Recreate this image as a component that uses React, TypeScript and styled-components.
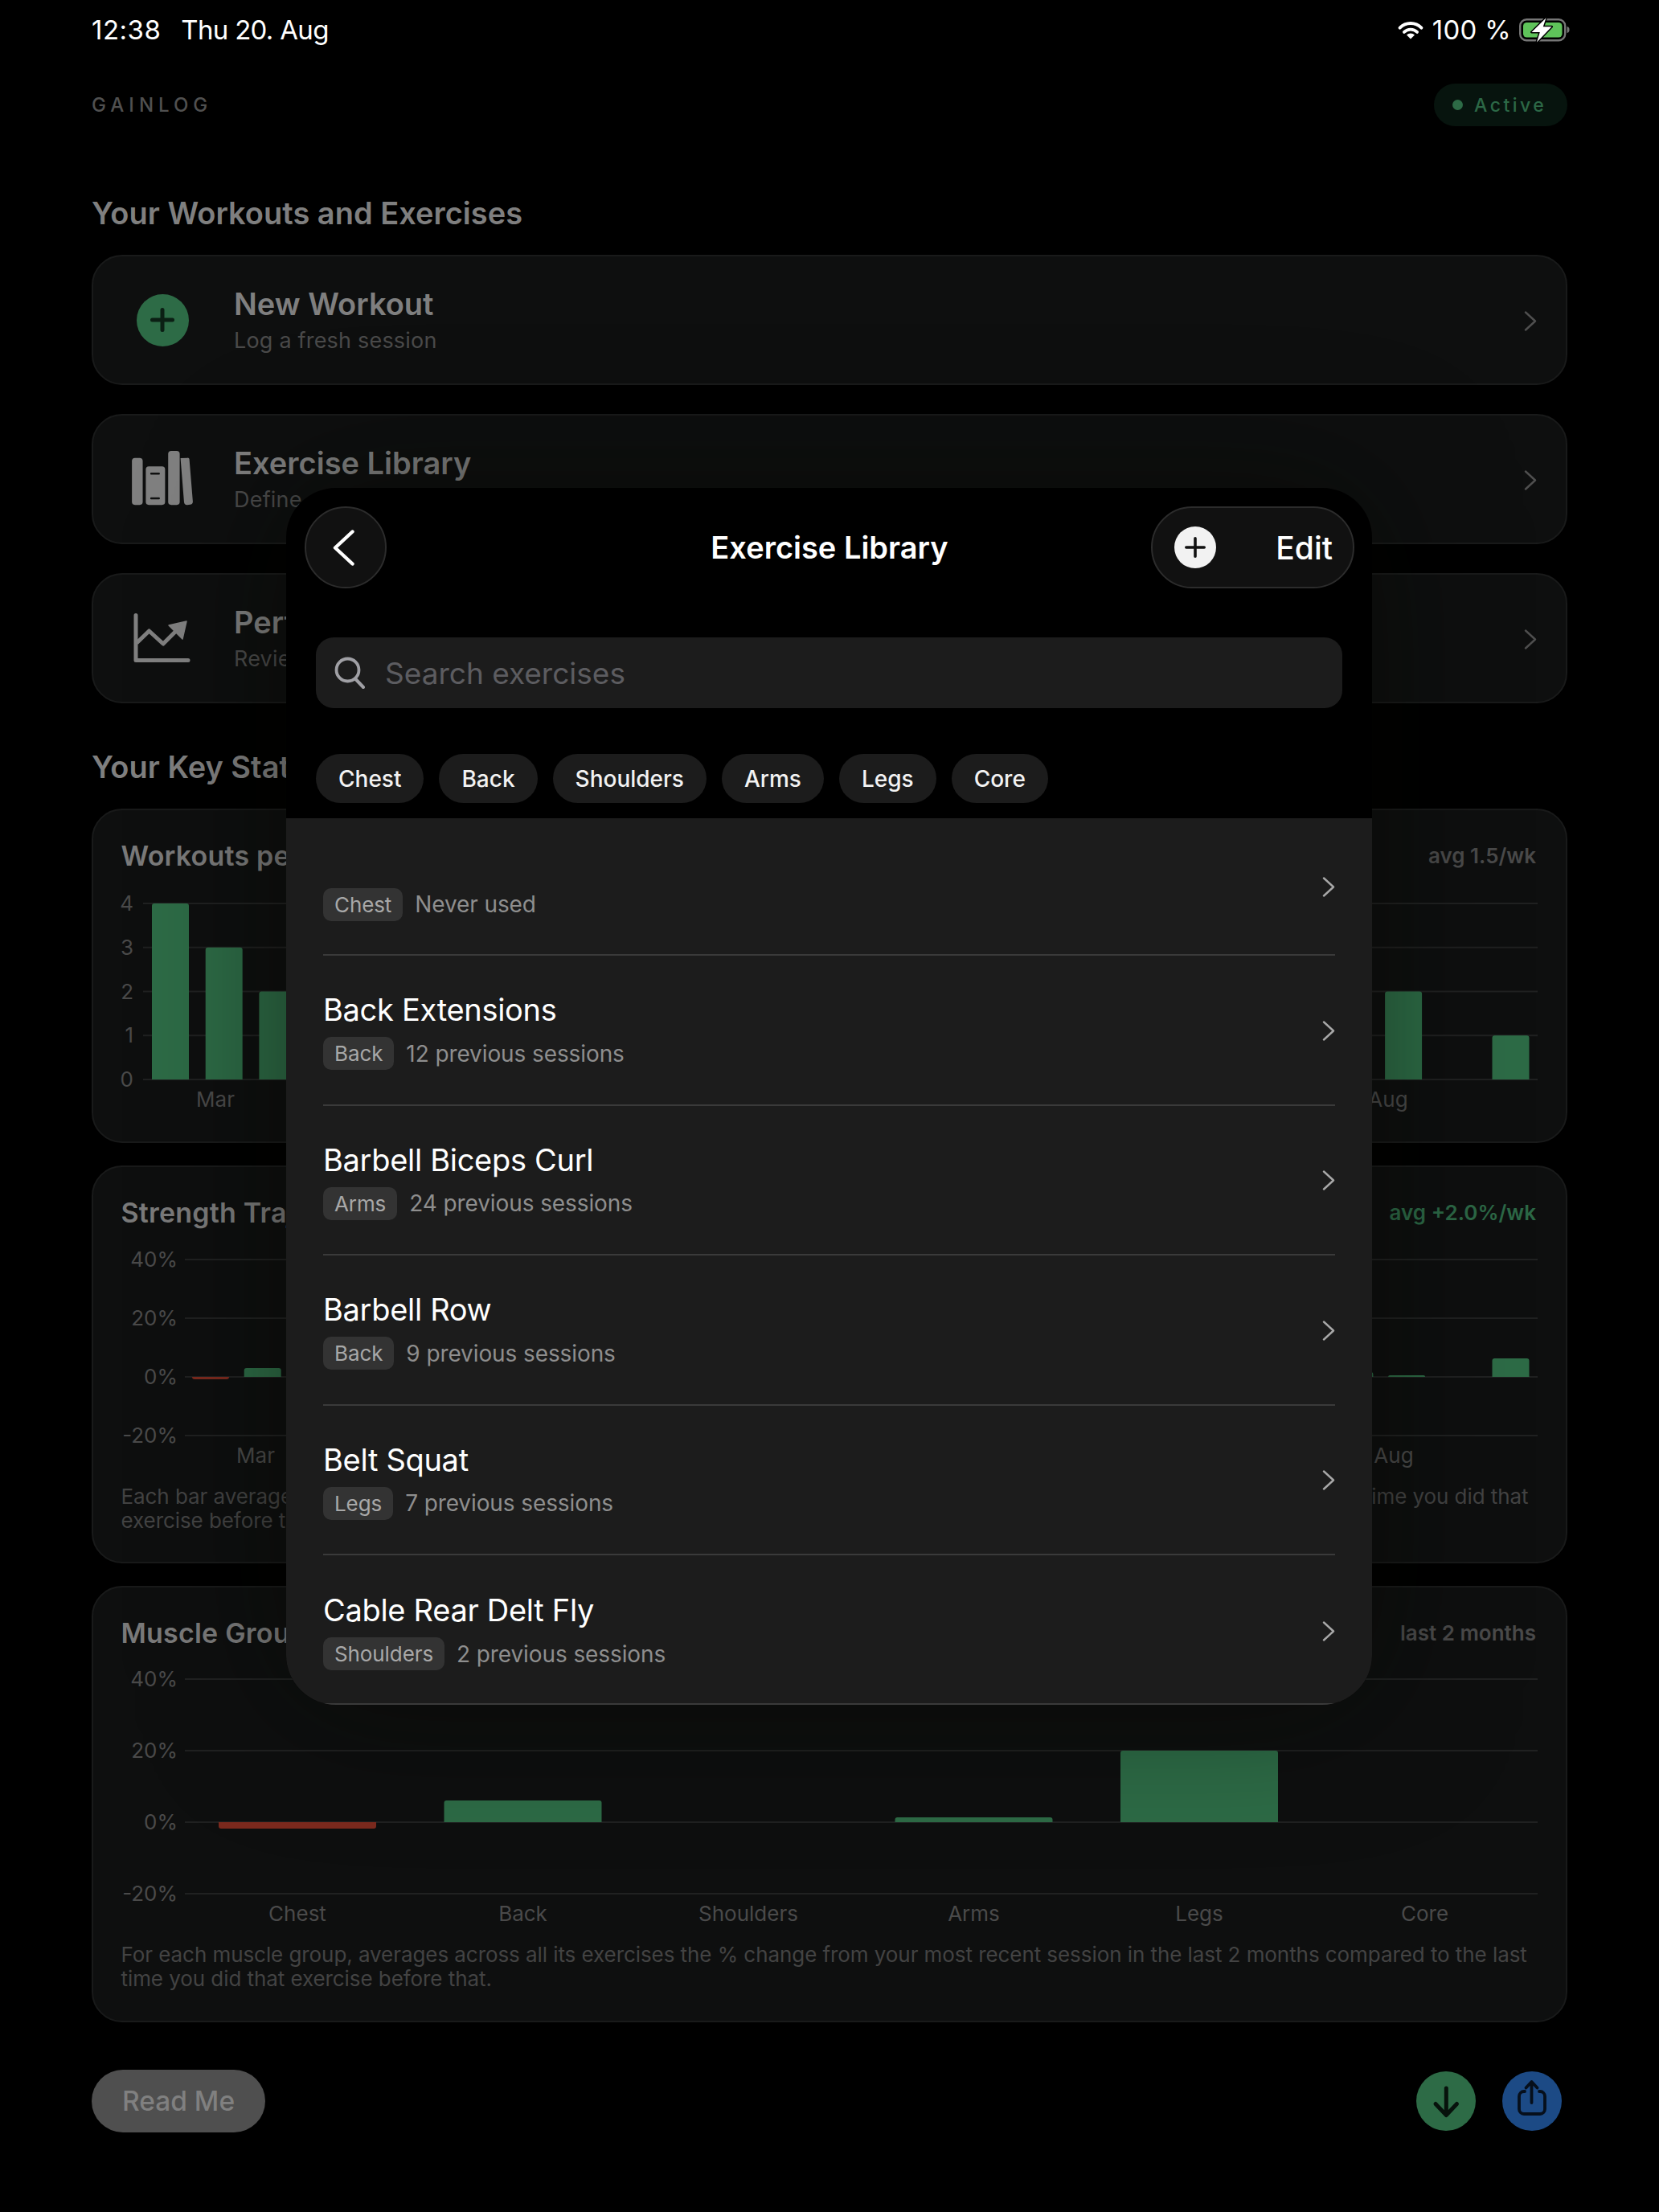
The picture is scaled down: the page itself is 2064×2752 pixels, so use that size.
import React from "react";
import styled, { createGlobalStyle } from "styled-components";

const GlobalStyle = createGlobalStyle`
  html, body {
    margin: 0;
    padding: 0;
    background: #000;
  }
  * {
    box-sizing: border-box;
  }
`;

const GREEN = "#2d6b46";
const RED = "#7c2a1e";
const GRID = "#202121";
const AXIS_TEXT = "#4a4a4a";
const FONT = `Inter, "Noto Sans", sans-serif`;

const Page = styled.div`
  position: relative;
  width: 2064px;
  height: 2752px;
  padding: 0 114px;
  overflow: hidden;
  background: #000;
  font-family: ${FONT};
`;

const StatusBar = styled.div`
  display: flex;
  align-items: center;
  justify-content: space-between;
  height: 74px;
  color: #fff;
  font-size: 33px;
`;

const StatusLeft = styled.div`
  display: flex;
  gap: 25px;
`;

const StatusTime = styled.span`
  letter-spacing: 0.5px;
`;

const StatusDate = styled.span`
  letter-spacing: -0.7px;
`;

const StatusRight = styled.div`
  display: flex;
  align-items: center;
  margin-right: -3px;
`;

const BatteryText = styled.span`
  margin: 0 10px 0 10px;
  letter-spacing: 0.3px;
`;

const BrandRow = styled.div`
  display: flex;
  align-items: center;
  justify-content: space-between;
  margin-top: 30px;
`;

const Brand = styled.div`
  color: #505050;
  font-size: 24px;
  font-weight: 500;
  letter-spacing: 6px;
`;

const ActivePill = styled.div`
  display: flex;
  align-items: center;
  gap: 14px;
  width: 166px;
  height: 53px;
  padding-left: 23px;
  border-radius: 27px;
  background: #07140e;
  color: #2c6846;
  font-size: 23px;
  font-weight: 500;
  letter-spacing: 3.5px;
`;

const ActiveDot = styled.span`
  width: 13px;
  height: 13px;
  border-radius: 50%;
  background: ${GREEN};
`;

const SectionTitle = styled.h2<{ $top: number }>`
  margin: ${(p) => p.$top}px 0 29px;
  color: #7f7f7f;
  font-size: 38px;
  font-weight: 600;
  line-height: 46px;
`;

const NavList = styled.div`
  display: flex;
  flex-direction: column;
  gap: 36px;
`;

const NavCard = styled.div`
  display: flex;
  align-items: center;
  height: 162px;
  padding-right: 36px;
  border: 2px solid #191a1a;
  border-radius: 38px;
  background: #0e0f0f;
`;

const NavIconSlot = styled.div`
  display: flex;
  align-items: center;
  justify-content: center;
  flex: 0 0 175px;
  padding-right: 3px;
`;

const NavText = styled.div`
  flex: 1;
`;

const NavTitle = styled.div`
  color: #7f7f7f;
  font-size: 38px;
  font-weight: 600;
  line-height: 46px;
`;

const NavSub = styled.div`
  margin-top: 6px;
  color: #4a4a4a;
  font-size: 27px;
  line-height: 34px;
  letter-spacing: 0.2px;
`;

const GreenCircle = styled.div`
  display: flex;
  align-items: center;
  justify-content: center;
  width: 65px;
  height: 65px;
  border-radius: 50%;
  background: ${GREEN};
`;

const Stats = styled.div`
  display: flex;
  flex-direction: column;
  gap: 28px;
`;

const ChartCard = styled.div<{ $height: number }>`
  height: ${(p) => p.$height}px;
  padding: 34px 36px 0 36px;
  border: 2px solid #191a1a;
  border-radius: 38px;
  background: #0e0f0f;
`;

const ChartHeader = styled.div`
  display: flex;
  align-items: center;
  justify-content: space-between;
  height: 44px;
  margin: 0 0 14px -1.5px;
  padding-right: 1px;
`;

const ChartTitle = styled.div`
  color: #7a7a7a;
  font-size: 34px;
  font-weight: 600;
  letter-spacing: 0.2px;
`;

const ChartNote = styled.div<{ $green?: boolean }>`
  color: ${(p) => (p.$green ? "#2c6846" : "#4a4a4a")};
  font-size: 26px;
  font-weight: 600;
`;

const ChartSvg = styled.svg`
  display: block;
  overflow: visible;
`;

const AxisText = styled.text`
  fill: ${AXIS_TEXT};
  font-family: ${FONT};
  font-size: 26px;
`;

const ChartDesc = styled.p`
  margin: 17px 0 0 -1.5px;
  color: #434343;
  font-size: 26px;
  line-height: 30px;
  letter-spacing: -0.07px;
`;

const Footer = styled.div`
  display: flex;
  align-items: center;
  justify-content: space-between;
  margin-top: 59px;
  padding-right: 7px;
`;

const ReadMe = styled.div`
  display: flex;
  align-items: center;
  justify-content: center;
  width: 216px;
  height: 78px;
  border-radius: 39px;
  background: #4f4f4f;
  color: #808080;
  font-size: 33.5px;
  font-weight: 500;
`;

const RoundActions = styled.div`
  display: flex;
  gap: 33px;
`;

const RoundAction = styled.div<{ $color: string }>`
  width: 74px;
  height: 74px;
  border-radius: 50%;
  background: ${(p) => p.$color};
`;

/* sheet over the dimmed page */
const Sheet = styled.div`
  position: absolute;
  top: 607px;
  left: 356px;
  width: 1351px;
  height: 1514px;
  padding-top: 23px;
  overflow: hidden;
  border-radius: 62px;
  background: #000;
  box-shadow: 0 0 170px rgba(5, 7, 0, 0.5);
`;

const SheetBar = styled.div`
  display: grid;
  grid-template-columns: 1fr auto 1fr;
  align-items: center;
  padding: 0 22px 0 23px;
`;

const BackButton = styled.div`
  display: flex;
  align-items: center;
  justify-content: center;
  width: 102px;
  height: 102px;
  padding-right: 6px;
  border: 2px solid #2c2c2c;
  border-radius: 50%;
  background: #111;
`;

const SheetTitle = styled.div`
  color: #fff;
  font-size: 38px;
  font-weight: 600;
`;

const EditPill = styled.div`
  display: flex;
  align-items: center;
  justify-content: space-between;
  justify-self: end;
  width: 253px;
  height: 102px;
  padding: 0 25px 0 27px;
  border: 2px solid #2c2c2c;
  border-radius: 51px;
  background: #111;
  color: #fff;
  font-size: 39px;
  font-weight: 500;
`;

const WhiteCircle = styled.div`
  display: flex;
  align-items: center;
  justify-content: center;
  width: 52px;
  height: 52px;
  border-radius: 50%;
  background: #f2f2f2;
`;

const SearchBox = styled.div`
  display: flex;
  align-items: center;
  gap: 25px;
  height: 88px;
  margin: 61px 37px 0;
  padding-left: 23px;
  border-radius: 22px;
  background: #1c1c1c;
  color: #5c5c60;
  font-size: 37px;
`;

const ChipRow = styled.div`
  display: flex;
  gap: 19px;
  margin: 57px 37px 19px;
`;

const FilterChip = styled.div`
  display: flex;
  align-items: center;
  height: 61px;
  padding: 0 28px;
  border-radius: 31px;
  background: #1c1c1c;
  color: #f2f2f2;
  font-size: 28px;
  font-weight: 500;
`;

const ExerciseList = styled.div`
  height: 1103px;
  padding: 0 46px;
  border-bottom: 2px solid #3a3a3a;
  background: #1c1c1c;
`;

const ExerciseRow = styled.div<{ $short?: boolean; $last?: boolean }>`
  display: flex;
  align-items: center;
  justify-content: space-between;
  height: ${(p) => (p.$short ? 171 : 186.5)}px;
  border-bottom: ${(p) => (p.$last ? "none" : "2px solid #3a3a3a")};
`;

const ExerciseName = styled.div<{ $blank?: boolean }>`
  height: ${(p) => (p.$blank ? 36 : 50)}px;
  color: #fff;
  font-size: 38px;
  line-height: 50px;
  letter-spacing: -0.3px;
`;

const ExerciseMeta = styled.div`
  display: flex;
  align-items: center;
  gap: 15px;
  margin-top: 9px;
  color: #8e8e8e;
  font-size: 28px;
  letter-spacing: -0.1px;
`;

const MuscleTag = styled.span`
  display: flex;
  align-items: center;
  height: 41px;
  padding: 0 14px;
  border-radius: 10px;
  background: #333;
  color: #a8a8a8;
  font-size: 26px;
`;

const ChevronSvg = styled.svg`
  margin-top: 2px;
`;

const Chevron = ({ color }: { color: string }) => (
  <ChevronSvg width="16" height="25" viewBox="0 0 16 25" fill="none">
    <path
      d="M2 1.5 L14 12.5 L2 23.5"
      stroke={color}
      strokeWidth="2.4"
      strokeLinecap="round"
      strokeLinejoin="round"
    />
  </ChevronSvg>
);

const BackChevron = () => (
  <svg width="27" height="45" viewBox="0 0 27 45" fill="none">
    <path
      d="M24.5 2.5 L3 22.5 L24.5 42.5"
      stroke="#fff"
      strokeWidth="4.4"
      strokeLinecap="round"
      strokeLinejoin="round"
    />
  </svg>
);

const PlusIcon = ({ size, weight, color }: { size: number; weight: number; color: string }) => (
  <svg width={size} height={size} viewBox={`0 0 ${size} ${size}`} fill="none">
    <path
      d={`M${size / 2} ${weight / 2} V${size - weight / 2} M${weight / 2} ${size / 2} H${size - weight / 2}`}
      stroke={color}
      strokeWidth={weight}
      strokeLinecap="round"
    />
  </svg>
);

const WifiIcon = () => (
  <svg width="34" height="23" viewBox="0 0 34 23" fill="none">
    <path d="M3.6 8.6 A19 19 0 0 1 30.4 8.6" stroke="#fff" strokeWidth="4" strokeLinecap="round" />
    <path d="M8.9 13.9 A11.5 11.5 0 0 1 25.1 13.9" stroke="#fff" strokeWidth="3.8" strokeLinecap="round" />
    <path d="M17 22.5 L12 17.6 A7 7 0 0 1 22 17.6 Z" fill="#fff" />
  </svg>
);

const BatteryIcon = () => (
  <svg width="63" height="31" viewBox="0 0 63 31" fill="none">
    <rect x="1.2" y="2.2" width="56" height="26" rx="8" stroke="#767676" strokeWidth="2.4" />
    <rect x="5" y="6" width="48.5" height="18.5" rx="4.5" fill="#5fc35a" />
    <path d="M59.5 11 C62 11.5 62.5 13 62.5 15 C62.5 17 62 18.5 59.5 19 Z" fill="#767676" />
    <path
      d="M33.5 0.3 L15.5 18 H25.8 L22 30.5 L40.5 11.2 H29.8 Z"
      fill="#fff"
      stroke="#000"
      strokeWidth="3"
      strokeLinejoin="round"
      paintOrder="stroke"
    />
  </svg>
);

const BooksIcon = () => (
  <svg width="77" height="71" viewBox="0 0 80 74" fill="#808080">
    <rect x="0" y="9" width="14" height="61" rx="4" />
    <path d="M22 20 H39 a4 4 0 0 1 4 4 V66 a4 4 0 0 1 -4 4 H22 a4 4 0 0 1 -4 -4 V24 a4 4 0 0 1 4 -4 Z" />
    <rect x="47" y="0" width="15" height="70" rx="4" />
    <path d="M63 9.5 L72 9 a2 2 0 0 1 2.5 2 L79 66 a4 4 0 0 1 -3.5 3.7 L72 70 a4 4 0 0 1 -4.4 -3.5 L63 9.5 Z" />
    <path d="M25 29.5 H35 M25 61.5 H35" stroke="#101111" strokeWidth="2.6" strokeLinecap="round" />
  </svg>
);

const TrendIcon = () => (
  <svg width="72" height="62" viewBox="0 0 72 62" fill="none">
    <path d="M3 2.5 V58.5 H68" stroke="#808080" strokeWidth="5" strokeLinecap="round" strokeLinejoin="round" />
    <path d="M4 37 L19.5 22 L37 38 L54 21" stroke="#808080" strokeWidth="5" strokeLinejoin="round" />
    <path d="M44 15 L66 10 L61 32 Z" fill="#808080" stroke="#808080" strokeWidth="1.5" strokeLinejoin="round" />
  </svg>
);

const SearchIcon = () => (
  <svg width="38" height="40" viewBox="0 0 38 40" fill="none">
    <circle cx="16.5" cy="16.5" r="14" stroke="#a0a0a5" strokeWidth="3.8" />
    <path d="M26.5 28 L36 38" stroke="#a0a0a5" strokeWidth="4" strokeLinecap="round" />
  </svg>
);

const DownloadIcon = () => (
  <svg width="74" height="74" viewBox="0 0 74 74" fill="none">
    <path
      d="M37.3 21 V54 M24 40.5 L37.3 54.5 L50.5 40.5"
      stroke="#07120c"
      strokeWidth="5"
      strokeLinecap="round"
      strokeLinejoin="round"
    />
  </svg>
);

const ShareIcon = () => (
  <svg width="74" height="74" viewBox="0 0 74 74" fill="none">
    <path
      d="M28 25 H27 a6 6 0 0 0 -6 6 V47 a6 6 0 0 0 6 6 H47 a6 6 0 0 0 6 -6 V31 a6 6 0 0 0 -6 -6 H46"
      stroke="#060f1b"
      strokeWidth="3.8"
      strokeLinecap="round"
    />
    <path
      d="M36.5 39 V13.5 M29.5 20.5 L36.5 13 L43.5 20.5"
      stroke="#060f1b"
      strokeWidth="3.8"
      strokeLinecap="round"
      strokeLinejoin="round"
    />
  </svg>
);

type Tick = { label: string; y: number };
type XLabel = { label: string; x: number };

type BarChartProps = {
  height: number;
  plotLeft: number; // grid start, from the svg's left edge
  labelGap: number;
  ticks: Tick[];
  zeroY: number;
  bars: { x: number; width: number; value: number }[];
  xLabels: XLabel[];
  xLabelY: number;
};

// top-rounded bar growing up from the zero line (or down, for a negative value)
const barPath = (x: number, w: number, zero: number, h: number) => {
  const r = Math.min(3, Math.abs(h));
  if (h >= 0) {
    return `M${x} ${zero} V${zero - h + r} Q${x} ${zero - h} ${x + r} ${zero - h} H${x + w - r} Q${x + w} ${zero - h} ${x + w} ${zero - h + r} V${zero} Z`;
  }
  const d = -h;
  return `M${x} ${zero} V${zero + d - r} Q${x} ${zero + d} ${x + r} ${zero + d} H${x + w - r} Q${x + w} ${zero + d} ${x + w} ${zero + d - r} V${zero} Z`;
};

const PLOT_WIDTH = 1761;

const BarChart = ({ height, plotLeft, labelGap, ticks, zeroY, bars, xLabels, xLabelY }: BarChartProps) => (
  <ChartSvg width={PLOT_WIDTH} height={height} viewBox={`0 0 ${PLOT_WIDTH} ${height}`}>
    {ticks.map((t) => (
      <g key={t.label}>
        <line x1={plotLeft} x2={PLOT_WIDTH} y1={t.y} y2={t.y} stroke={GRID} strokeWidth="2" />
        <AxisText x={plotLeft - labelGap} y={t.y + 9} textAnchor="end">
          {t.label}
        </AxisText>
      </g>
    ))}
    {bars
      .filter((b) => b.value !== 0)
      .map((b) => (
        <path
          key={b.x}
          d={barPath(b.x, b.width, zeroY, b.value)}
          fill={b.value > 0 ? GREEN : RED}
        />
      ))}
    {xLabels.map((l) => (
      <AxisText key={l.label} x={l.x} y={xLabelY} textAnchor="middle">
        {l.label}
      </AxisText>
    ))}
  </ChartSvg>
);

const weekly = [4, 3, 2, 1, 2, 2, 1, 2, 1, 1, 2, 1, 2, 1, 1, 2, 1, 2, 1, 2, 1, 1, 1, 2, 0, 1];
const weeklyBars = weekly.map((v, i) => ({
  x: 37 + i * 66.7,
  width: 46,
  value: v * 54.75,
}));

const strength = [-3, 11, 4, 0, 8, 5, -2, 6, 3, 9, 2, 4, 7, 1, 5, 3, 6, 2, 4, 8, 1, 3, 6, 2, 0, 23];
const strengthBars = strength.map((v, i) => ({
  x: 87 + i * 64.7,
  width: 46,
  value: v,
}));

const muscleBars = [-8, 27, 0, 6, 89, 0].map((v, i) => ({
  x: 120 + i * 280.5,
  width: 196,
  value: v,
}));

const muscleLabels = ["Chest", "Back", "Shoulders", "Arms", "Legs", "Core"];

const exercises = [
  { name: "Back Extensions", muscle: "Back", sessions: "12 previous sessions" },
  { name: "Barbell Biceps Curl", muscle: "Arms", sessions: "24 previous sessions" },
  { name: "Barbell Row", muscle: "Back", sessions: "9 previous sessions" },
  { name: "Belt Squat", muscle: "Legs", sessions: "7 previous sessions" },
  { name: "Cable Rear Delt Fly", muscle: "Shoulders", sessions: "2 previous sessions" },
];

const App = () => {
  return (
    <Page>
      <GlobalStyle />
      <StatusBar>
        <StatusLeft>
          <StatusTime>12:38</StatusTime>
          <StatusDate>Thu 20. Aug</StatusDate>
        </StatusLeft>
        <StatusRight>
          <WifiIcon />
          <BatteryText>100 %</BatteryText>
          <BatteryIcon />
        </StatusRight>
      </StatusBar>

      <BrandRow>
        <Brand>GAINLOG</Brand>
        <ActivePill>
          <ActiveDot />
          Active
        </ActivePill>
      </BrandRow>

      <SectionTitle $top={85}>Your Workouts and Exercises</SectionTitle>
      <NavList>
        <NavCard>
          <NavIconSlot>
            <GreenCircle>
              <PlusIcon size={30} weight={5} color="#0b1f14" />
            </GreenCircle>
          </NavIconSlot>
          <NavText>
            <NavTitle>New Workout</NavTitle>
            <NavSub>Log a fresh session</NavSub>
          </NavText>
          <Chevron color="#4f4f4f" />
        </NavCard>
        <NavCard>
          <NavIconSlot>
            <BooksIcon />
          </NavIconSlot>
          <NavText>
            <NavTitle>Exercise Library</NavTitle>
            <NavSub>Define and manage exercises</NavSub>
          </NavText>
          <Chevron color="#4f4f4f" />
        </NavCard>
        <NavCard>
          <NavIconSlot>
            <TrendIcon />
          </NavIconSlot>
          <NavText>
            <NavTitle>Performance</NavTitle>
            <NavSub>Review your progress</NavSub>
          </NavText>
          <Chevron color="#4f4f4f" />
        </NavCard>
      </NavList>

      <SectionTitle $top={56}>Your Key Stats</SectionTitle>
      <Stats>
        <ChartCard $height={416}>
          <ChartHeader>
            <ChartTitle>Workouts per Week</ChartTitle>
            <ChartNote>avg 1.5/wk</ChartNote>
          </ChartHeader>
          <BarChart
            height={290}
            plotLeft={26}
            labelGap={12}
            ticks={["4", "3", "2", "1", "0"].map((label, i) => ({ label, y: 24 + i * 54.75 }))}
            zeroY={243}
            bars={weeklyBars}
            xLabels={[
              { label: "Mar", x: 116 },
              { label: "Aug", x: 1575 },
            ]}
            xLabelY={277}
          />
        </ChartCard>

        <ChartCard $height={495}>
          <ChartHeader>
            <ChartTitle>Strength Trajectory</ChartTitle>
            <ChartNote $green>avg +2.0%/wk</ChartNote>
          </ChartHeader>
          <BarChart
            height={286}
            plotLeft={78}
            labelGap={9}
            ticks={["40%", "20%", "0%", "-20%"].map((label, i) => ({ label, y: 23 + i * 73 }))}
            zeroY={169}
            bars={strengthBars}
            xLabels={[
              { label: "Mar", x: 166 },
              { label: "Aug", x: 1582 },
            ]}
            xLabelY={276}
          />
          <ChartDesc>
            Each bar averages across all exercises that week the % change from your most recent session that week compared to the last time you did that exercise before that.
          </ChartDesc>
        </ChartCard>

        <ChartCard $height={543}>
          <ChartHeader>
            <ChartTitle>Muscle Group Progress</ChartTitle>
            <ChartNote>last 2 months</ChartNote>
          </ChartHeader>
          <BarChart
            height={333}
            plotLeft={78}
            labelGap={9}
            ticks={["40%", "20%", "0%", "-20%"].map((label, i) => ({ label, y: 22 + i * 89 }))}
            zeroY={200}
            bars={muscleBars}
            xLabels={muscleLabels.map((label, i) => ({ label, x: 218 + i * 280.5 }))}
            xLabelY={323}
          />
          <ChartDesc>
            For each muscle group, averages across all its exercises the % change from your most recent session in the last 2 months compared to the last time you did that exercise before that.
          </ChartDesc>
        </ChartCard>
      </Stats>

      <Footer>
        <ReadMe>Read Me</ReadMe>
        <RoundActions>
          <RoundAction $color={GREEN}>
            <DownloadIcon />
          </RoundAction>
          <RoundAction $color="#1c4a85">
            <ShareIcon />
          </RoundAction>
        </RoundActions>
      </Footer>

      <Sheet>
        <SheetBar>
          <BackButton>
            <BackChevron />
          </BackButton>
          <SheetTitle>Exercise Library</SheetTitle>
          <EditPill>
            <WhiteCircle>
              <PlusIcon size={26} weight={3.6} color="#111" />
            </WhiteCircle>
            Edit
          </EditPill>
        </SheetBar>

        <SearchBox>
          <SearchIcon />
          Search exercises
        </SearchBox>

        <ChipRow>
          {muscleLabels.map((m) => (
            <FilterChip key={m}>{m}</FilterChip>
          ))}
        </ChipRow>

        <ExerciseList>
          <ExerciseRow $short>
            <div>
              <ExerciseName $blank />
              <ExerciseMeta>
                <MuscleTag>Chest</MuscleTag>
                Never used
              </ExerciseMeta>
            </div>
            <Chevron color="#a8a8a8" />
          </ExerciseRow>
          {exercises.map((e, i) => (
            <ExerciseRow key={e.name} $last={i === exercises.length - 1}>
              <div>
                <ExerciseName>{e.name}</ExerciseName>
                <ExerciseMeta>
                  <MuscleTag>{e.muscle}</MuscleTag>
                  {e.sessions}
                </ExerciseMeta>
              </div>
              <Chevron color="#a8a8a8" />
            </ExerciseRow>
          ))}
        </ExerciseList>
      </Sheet>
    </Page>
  );
};

export default App;
